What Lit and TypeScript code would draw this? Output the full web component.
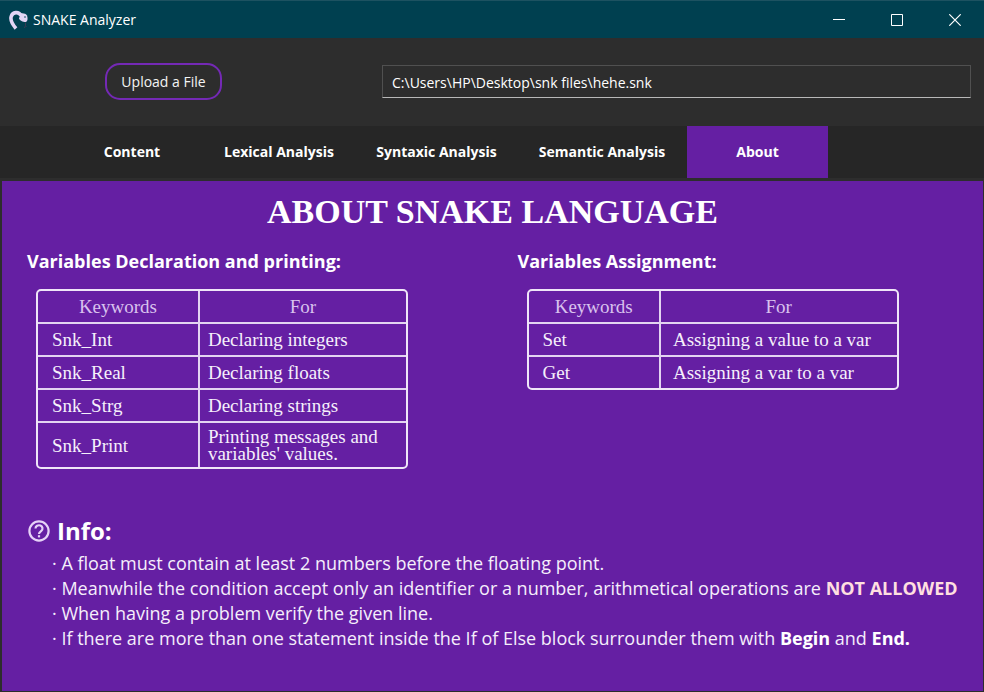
import { LitElement, html, css } from "lit";
import { customElement, property, state } from "lit/decorators.js";

interface Keyword {
  name: string;
  use: string;
}

const DECLARATIONS: Keyword[] = [
  { name: "Snk_Int", use: "Declaring integers" },
  { name: "Snk_Real", use: "Declaring floats" },
  { name: "Snk_Strg", use: "Declaring strings" },
  { name: "Snk_Print", use: "Printing messages and variables' values." },
];

const ASSIGNMENTS: Keyword[] = [
  { name: "Set", use: "Assigning a value to a var" },
  { name: "Get", use: "Assigning a var to a var" },
];

const TABS = ["Content", "Lexical Analysis", "Syntaxic Analysis", "Semantic Analysis", "About"];

@customElement("title-bar")
class TitleBar extends LitElement {
  static styles = css`
    :host {
      display: flex;
      align-items: center;
      height: 38px;
      box-sizing: border-box;
      border-top: 1px solid #1d5261;
      background: #004050;
      color: #fff;
    }
    .logo {
      width: 20px;
      height: 20px;
      margin: 0 4px 0 9px;
    }
    .title {
      flex: 1;
      font-size: 14px;
      font-weight: 400;
      margin: 0;
    }
    .control {
      width: 58px;
      height: 36px;
      padding: 0;
      border: 0;
      background: none;
      color: inherit;
      display: grid;
      place-items: center;
    }
  `;

  render() {
    return html`
      <svg class="logo" viewBox="0 0 20 20" aria-hidden="true">
        <path d="M7 18.500C4 15 .8 11 2.200 6.500 3.600 2 9.500 1 12 5.500" fill="none" stroke="#e3d5f5" stroke-width="3.600" />
        <path d="M11.500 3.500C13.500 2.800 17 3.500 18 5.500 19 8 18.800 11 17 12 15 12.500 10.500 10.500 10 8.500Z" fill="#e3d5f5" />
        <circle cx="16" cy="7" r=".8" fill="#004050" />
        <path d="M16.500 12.500v3M15.500 18l1-2.500 1 1" fill="none" stroke="#3c3a55" />
      </svg>
      <h1 class="title">SNAKE Analyzer</h1>
      <button class="control" aria-label="Minimize">
        <svg width="12" height="12" viewBox="0 0 12 12"><path d="M0 5.500h12" stroke="#fff" /></svg>
      </button>
      <button class="control" aria-label="Maximize">
        <svg width="12" height="12" viewBox="0 0 12 12"><path d="M.5.5h11v11H.5z" fill="none" stroke="#fff" /></svg>
      </button>
      <button class="control" aria-label="Close">
        <svg width="12" height="12" viewBox="0 0 12 12"><path d="M.3.3l11.400 11.400M11.700.3L.3 11.700" stroke="#fff" stroke-width="1.200" /></svg>
      </button>
    `;
  }
}

@customElement("keyword-table")
class KeywordTable extends LitElement {
  @property({ attribute: false }) rows: Keyword[] = [];
  @property({ reflect: true }) split = "wide";
  @property() caption = "";

  static styles = css`
    :host {
      display: block;
      max-width: 372px;
    }
    .table {
      width: 100%;
      table-layout: fixed;
      border: 2px solid #efe6f8;
      border-radius: 5px;
      border-spacing: 0;
      font: 19px/17px "Liberation Serif", serif;
      color: #f6f0fb;
    }
    .key {
      width: 44%;
    }
    :host([split="narrow"]) .key {
      width: 36%;
    }
    .head,
    .cell {
      box-sizing: border-box;
      height: 33px;
      padding: 0 8px;
    }
    .head {
      height: 31px;
      padding-bottom: 1px;
      font-weight: 400;
      color: #d9c2ee;
      text-align: center;
    }
    .cell {
      border-top: 2px solid #e3d4f1;
      text-align: left;
      font-weight: 400;
      padding: 5px 8px;
    }
    .name {
      padding-left: 14px;
    }
    .use {
      padding-left: 8px;
    }
    :host([split="narrow"]) .use {
      padding-left: 12px;
    }
    .key {
      border-right: 2px solid #e3d4f1;
    }
  `;

  render() {
    return html`
      <table class="table" aria-label=${this.caption}>
        <thead>
          <tr>
            <th class="head key" scope="col">Keywords</th>
            <th class="head" scope="col">For</th>
          </tr>
        </thead>
        <tbody>
          ${this.rows.map(
            (row) => html`<tr>
              <th class="cell name key" scope="row">${row.name}</th>
              <td class="cell use">${row.use}</td>
            </tr>`
          )}
        </tbody>
      </table>
    `;
  }
}

@customElement("app-root")
class AppRoot extends LitElement {
  @state() private active = "About";

  static styles = css`
    :host {
      display: flex;
      flex-direction: column;
      min-height: 100vh;
      box-sizing: border-box;
      background: #2d2d2d;
      color: #fff;
      font-family: "Open Sans", "Noto Sans", sans-serif;
    }
    .toolbar {
      display: flex;
      align-items: center;
      gap: 160px;
      height: 87px;
      padding: 0 13px 1px 105px;
    }
    .upload {
      flex: none;
      width: 117px;
      height: 37px;
      padding: 0 0 1px;
      border: 2px solid #7429b5;
      border-radius: 15px;
      background: none;
      color: #f4f4f4;
      font: 14px "Open Sans", sans-serif;
    }
    .path {
      flex: 1;
      min-width: 0;
      height: 33px;
      box-sizing: border-box;
      padding: 2px 9px 0;
      border: 1px solid #505050;
      border-bottom-color: #b8b8b8;
      background: #2d2d2d;
      color: #fff;
      font: 14px "Open Sans", sans-serif;
    }
    .tabs {
      display: grid;
      grid-template-columns: 140px 154px 161px 170px 141px;
      height: 52px;
      padding-left: 62px;
      background: #262626;
    }
    .tab {
      padding: 0 0 2px;
      border: 0;
      background: none;
      color: #fff;
      font: bold 14px "Open Sans", sans-serif;
    }
    .tab[aria-selected="true"] {
      background: #651fa3;
    }
    .panel {
      flex: 1;
      margin: 3px 1px 1px 2px;
      background: #651fa3;
    }
    .heading {
      margin: 0;
      padding-top: 10px;
      text-align: center;
      font: bold 34px/42px "Liberation Serif", serif;
    }
    .columns {
      display: grid;
      grid-template-columns: 1fr 1fr;
      padding-top: 15px;
    }
    .column {
      padding-left: 25px;
    }
    .subheading {
      margin: 0;
      font-size: 18px;
      line-height: 26px;
      font-weight: 700;
    }
    .keywords {
      margin: 15px 0 0 9px;
    }
    .info-title {
      display: flex;
      align-items: center;
      gap: 7px;
      margin: 45px 0 0 26px;
      font-size: 24px;
      line-height: 34px;
      font-weight: 700;
    }
    .help {
      width: 22px;
      height: 22px;
    }
    .notes {
      list-style: none;
      margin: 3px 0 0;
      padding: 0 0 0 50px;
      font-size: 18px;
      line-height: 25px;
      color: #f5eefb;
    }
    .note::before {
      content: "· ";
    }
    .alert {
      color: #ffdfe0;
    }
    .strong {
      color: #fff;
    }
  `;

  render() {
    return html`
      <title-bar></title-bar>
      <div class="toolbar">
        <button class="upload">Upload a File</button>
        <input class="path" type="text" aria-label="File path" .value=${"C:\\Users\\HP\\Desktop\\snk files\\hehe.snk"} />
      </div>
      <div class="tabs" role="tablist">
        ${TABS.map(
          (tab) => html`<button
            class="tab"
            role="tab"
            aria-selected=${tab === this.active ? "true" : "false"}
            @click=${() => (this.active = tab)}
          >${tab}</button>`
        )}
      </div>
      <main class="panel">
        <h2 class="heading">ABOUT SNAKE LANGUAGE</h2>
        <div class="columns">
          <section class="column">
            <h3 class="subheading">Variables Declaration and printing:</h3>
            <keyword-table class="keywords" caption="Declaration keywords" .rows=${DECLARATIONS}></keyword-table>
          </section>
          <section class="column">
            <h3 class="subheading">Variables Assignment:</h3>
            <keyword-table class="keywords" split="narrow" caption="Assignment keywords" .rows=${ASSIGNMENTS}></keyword-table>
          </section>
        </div>
        <h3 class="info-title">
          <svg class="help" viewBox="0 0 22 22" aria-hidden="true">
            <circle cx="11" cy="11" r="9.600" fill="none" stroke="#e6d3f7" stroke-width="2.200" />
            <path d="M7.500 8.500a3.500 3.200 0 1 1 5.800 2.400c-1.300 1-2.300 1.500-2.300 3" fill="none" stroke="#e6d3f7" stroke-width="2.200" />
            <path d="M9.900 15.200h2.200v2.200h-2.200z" fill="#e6d3f7" />
          </svg>
          Info:
        </h3>
        <ul class="notes">
          <li class="note">A float must contain at least 2 numbers before the floating point.</li>
          <li class="note">Meanwhile the condition accept only an identifier or a number, arithmetical operations are <b class="alert">NOT ALLOWED</b></li>
          <li class="note">When having a problem verify the given line.</li>
          <li class="note">If there are more than one statement inside the If of Else block surrounder them with <b class="strong">Begin</b> and <b class="strong">End.</b></li>
        </ul>
      </main>
    `;
  }
}
